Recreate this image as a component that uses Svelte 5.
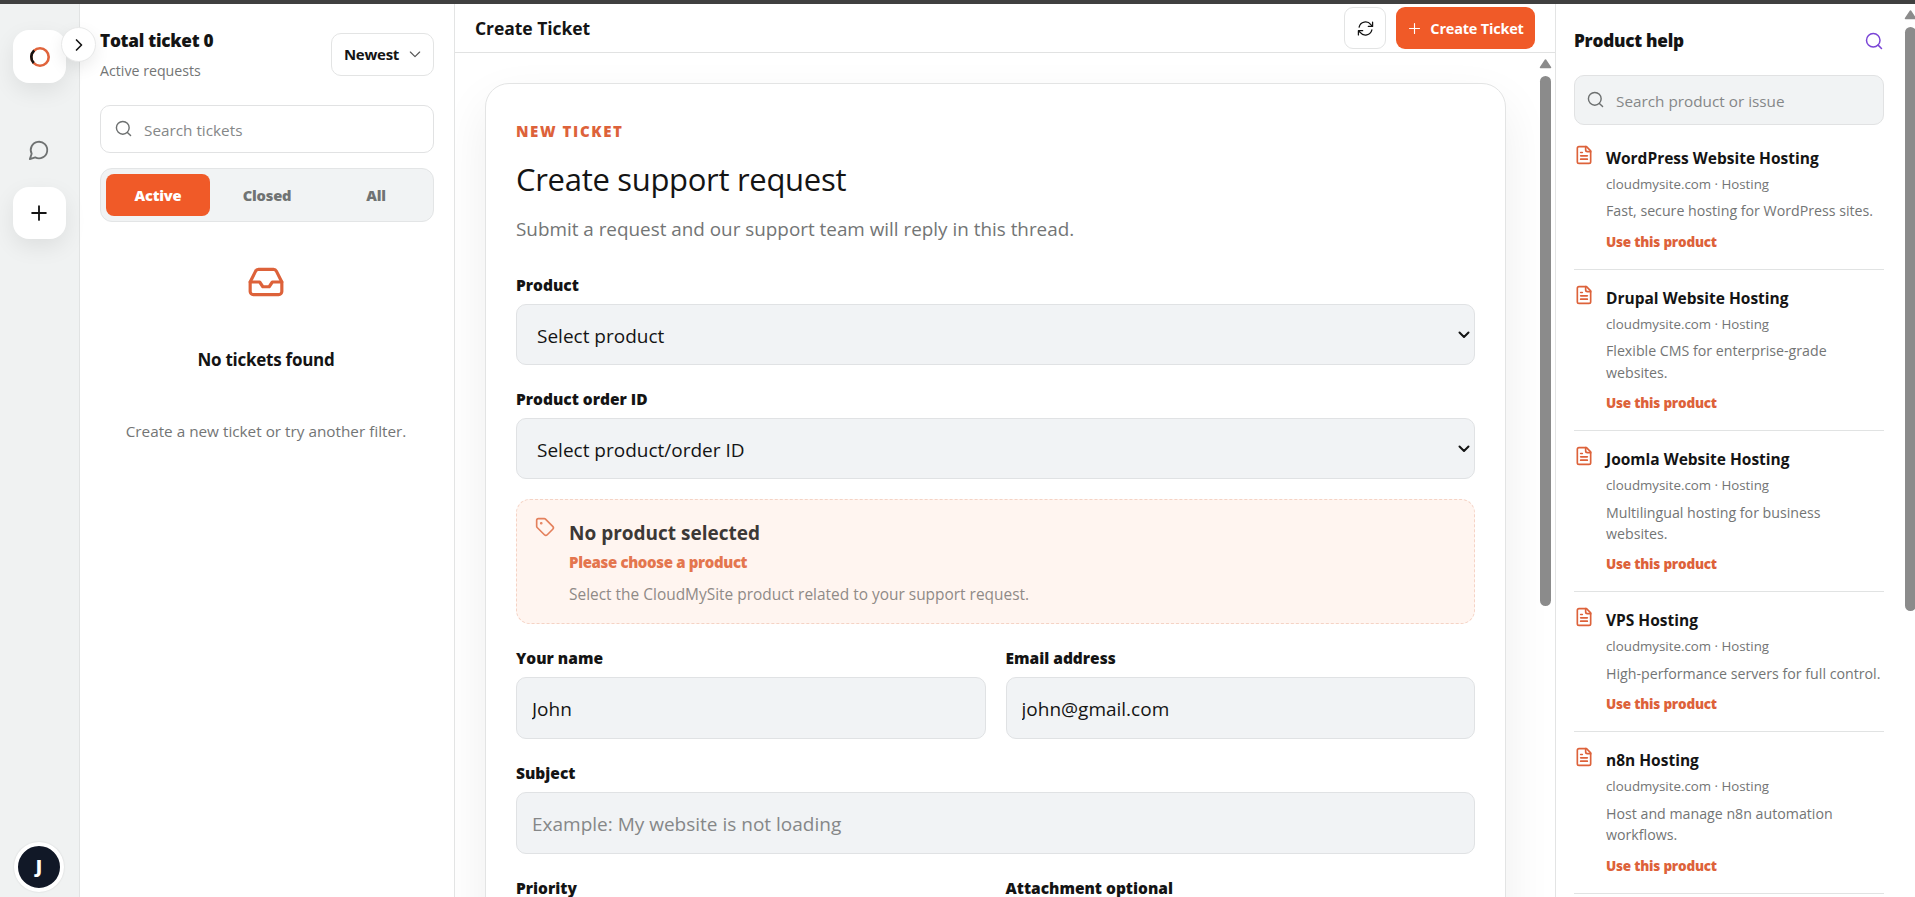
<script lang="ts">
  interface HelpItem {
    title: string;
    text: string;
  }

  const tabs = ["Active", "Closed", "All"];
  let activeTab = $state("Active");

  const products: HelpItem[] = [
    { title: "WordPress Website Hosting", text: "Fast, secure hosting for WordPress sites." },
    { title: "Drupal Website Hosting", text: "Flexible CMS for enterprise-grade websites." },
    { title: "Joomla Website Hosting", text: "Multilingual hosting for business websites." },
    { title: "VPS Hosting", text: "High-performance servers for full control." },
    { title: "n8n Hosting", text: "Host and manage n8n automation workflows." },
  ];

  let name = $state("John");
  let email = $state("john@gmail.com");
  let subject = $state("");
</script>

{#snippet searchIcon(size: number)}
  <svg class="icon" width={size} height={size} viewBox="0 0 24 24">
    <circle cx="11" cy="11" r="9" />
    <path d="m17.5 17.5 4.5 4.5" />
  </svg>
{/snippet}

{#snippet dropdown(placeholder: string)}
  <div class="select">
    <select><option>{placeholder}</option></select>
    <svg class="icon" width="12" height="8" viewBox="0 0 12 8">
      <path d="m1.5 1.5 4.5 4.5 4.5-4.5" />
    </svg>
  </div>
{/snippet}

<div class="page">
  <div class="topline"></div>

  <div class="layout">
    <nav class="rail">
      <button class="rail-btn raised" aria-label="Home">
        <svg class="icon" width="22" height="22" viewBox="0 0 22 22">
          <circle cx="11" cy="11" r="8.7" stroke="#e0643c" stroke-width="2.6" />
          <path d="M5.2 4.5a8.7 8.7 0 0 0-.5 12.5" stroke="#141414" stroke-width="2.6" stroke-linecap="butt" />
        </svg>
      </button>
      <button class="rail-btn chat" aria-label="Tickets">
        <svg class="icon" width="22" height="22" viewBox="0 0 24 24">
          <path d="M7.9 20A9 9 0 1 0 4 16.1L2 22Z" />
        </svg>
      </button>
      <button class="rail-btn raised new" aria-label="New ticket">
        <svg class="icon" width="22" height="22" viewBox="0 0 24 24">
          <path d="M4.5 12h15M12 4.5v15" />
        </svg>
      </button>
      <div class="avatar">J</div>
      <button class="toggle" aria-label="Expand">
        <svg class="icon" width="20" height="20" viewBox="0 0 24 24">
          <path d="m9 18 6-6-6-6" />
        </svg>
      </button>
    </nav>

    <section class="tickets">
      <div class="tickets-head">
        <div>
          <h2>Total ticket 0</h2>
          <p>Active requests</p>
        </div>
        <button class="sort">
          Newest
          <svg class="icon" width="16" height="16" viewBox="0 0 24 24">
            <path d="m5 9 7 7 7-7" />
          </svg>
        </button>
      </div>

      <label class="search">
        {@render searchIcon(17)}
        <input placeholder="Search tickets" />
      </label>

      <div class="tabs">
        {#each tabs as tab}
          <button class:active={tab === activeTab} onclick={() => (activeTab = tab)}>{tab}</button>
        {/each}
      </div>

      <div class="empty">
        <svg class="icon" width="38" height="38" viewBox="0 0 24 24">
          <path d="M22 12h-6l-2 3h-4l-2-3H2" />
          <path d="M5.45 5.11 2 12v6a2 2 0 0 0 2 2h16a2 2 0 0 0 2-2v-6l-3.45-6.89A2 2 0 0 0 16.76 4H7.24a2 2 0 0 0-1.79 1.11z" />
        </svg>
        <h3>No tickets found</h3>
        <p>Create a new ticket or try another filter.</p>
      </div>
    </section>

    <main>
      <header>
        <h1>Create Ticket</h1>
        <button class="refresh" aria-label="Refresh">
          <svg class="icon" width="17" height="17" viewBox="0 0 24 24">
            <path d="M3 10a9.3 9.3 0 0 1 16.5-3.5L22 9M22 3v6h-6" />
            <path d="M21 14a9.3 9.3 0 0 1-16.5 3.5L2 15M2 21v-6h6" />
          </svg>
        </button>
        <button class="create">
          <svg class="icon" width="15" height="15" viewBox="0 0 24 24">
            <path d="M4 12h16M12 4v16" />
          </svg>
          Create Ticket
        </button>
      </header>

      <div class="main-body">
        <div class="scroll-area">
          <form class="card">
            <span class="eyebrow">NEW TICKET</span>
            <h2>Create support request</h2>
            <p class="lead">Submit a request and our support team will reply in this thread.</p>

            <label class="field">
              <span>Product</span>
              {@render dropdown("Select product")}
            </label>

            <label class="field">
              <span>Product order ID</span>
              {@render dropdown("Select product/order ID")}
            </label>

            <div class="notice">
              <svg class="icon" width="20" height="20" viewBox="0 0 24 24">
                <path d="M12.59 2.59A2 2 0 0 0 11.17 2H4a2 2 0 0 0-2 2v7.17a2 2 0 0 0 .59 1.42l8.7 8.7a2.43 2.43 0 0 0 3.42 0l6.58-6.58a2.43 2.43 0 0 0 0-3.42z" />
                <circle cx="7.5" cy="7.5" r=".6" fill="currentColor" />
              </svg>
              <div>
                <h3>No product selected</h3>
                <strong>Please choose a product</strong>
                <p>Select the CloudMySite product related to your support request.</p>
              </div>
            </div>

            <div class="row">
              <label class="field">
                <span>Your name</span>
                <input bind:value={name} />
              </label>
              <label class="field">
                <span>Email address</span>
                <input bind:value={email} />
              </label>
            </div>

            <label class="field">
              <span>Subject</span>
              <input bind:value={subject} placeholder="Example: My website is not loading" />
            </label>

            <div class="row">
              <label class="field">
                <span>Priority</span>
                {@render dropdown("")}
              </label>
              <label class="field">
                <span>Attachment optional</span>
                <input type="text" />
              </label>
            </div>
          </form>
        </div>
        <div class="scrollbar">
          <svg width="13" height="10" viewBox="0 0 13 10"><path d="M6.5 1 11.5 8.5h-10z" /></svg>
          <div class="thumb main-thumb"></div>
        </div>
      </div>
    </main>

    <aside>
      <div class="help">
        <div class="help-head">
          <h2>Product help</h2>
          {@render searchIcon(18)}
        </div>
        <label class="search filled">
          {@render searchIcon(17)}
          <input placeholder="Search product or issue" />
        </label>

        {#each products as product}
          <article>
            <svg class="icon" width="20" height="20" viewBox="0 0 24 24">
              <path d="M15 2H6a2 2 0 0 0-2 2v16a2 2 0 0 0 2 2h12a2 2 0 0 0 2-2V7z" />
              <path d="M14 2v4a2 2 0 0 0 2 2h4M10 9H8M16 13H8M16 17H8" />
            </svg>
            <div>
              <h3>{product.title}</h3>
              <small>cloudmysite.com · Hosting</small>
              <p>{product.text}</p>
              <a href="#product">Use this product</a>
            </div>
          </article>
        {/each}
      </div>
      <div class="scrollbar outer">
        <svg width="13" height="10" viewBox="0 0 13 10"><path d="M6.5 1 11.5 8.5h-10z" /></svg>
        <div class="thumb help-thumb"></div>
      </div>
    </aside>
  </div>
</div>

<style>
  :global(body) {
    margin: 0;
    overflow: hidden;
  }

  .page {
    display: flex;
    flex-direction: column;
    height: 100vh;
    overflow: hidden;
    background: #fff;
    color: #141414;
    font-family: "Open Sans", "Noto Sans", sans-serif;
  }

  .page * {
    box-sizing: border-box;
  }

  h1, h2, h3, p {
    margin: 0;
  }

  button, input, select {
    font-family: inherit;
    color: inherit;
  }

  button {
    display: flex;
    align-items: center;
    justify-content: center;
    padding: 0;
    border: 0;
    background: none;
    white-space: nowrap;
  }

  .icon {
    flex: none;
    fill: none;
    stroke: currentColor;
    stroke-width: 2;
    stroke-linecap: round;
    stroke-linejoin: round;
  }

  .topline {
    flex: none;
    height: 4px;
    background: #404040;
  }

  .layout {
    flex: 1;
    min-height: 0;
    display: grid;
    grid-template-columns: 80px 375px 1101px 359px;
  }

  /* left rail */
  .rail {
    position: relative;
    display: flex;
    flex-direction: column;
    align-items: center;
    padding: 26px 0 5px;
    border-right: 1px solid #e1e3e3;
    background: #f0f2f2;
  }

  .rail-btn {
    width: 53px;
    height: 53px;
    border-radius: 16px;
  }

  .rail-btn.raised {
    background: #fff;
    box-shadow: 0 8px 22px rgba(0, 0, 0, 0.08);
  }

  .rail-btn.new {
    height: 52px;
    padding-right: 1px;
  }

  .rail-btn.chat {
    height: 52px;
    margin: 41px 0 11px;
    padding-right: 1px;
    color: #6f7272;
  }

  .avatar {
    width: 50px;
    height: 50px;
    margin: auto 1px 0 0;
    border: 4px solid #fff;
    border-radius: 50%;
    background: #111827;
    box-shadow: 0 0 2px rgba(0, 0, 0, 0.15);
    color: #fff;
    font-size: 18px;
    font-weight: 800;
    line-height: 41px;
    text-align: center;
  }

  .toggle {
    position: absolute;
    top: 23px;
    right: -17px;
    z-index: 2;
    width: 35px;
    height: 35px;
    border: 1px solid #e8e9e9;
    border-radius: 50%;
    background: #fff;
    box-shadow: 0 6px 16px rgba(0, 0, 0, 0.08);
  }

  /* ticket list */
  .tickets {
    padding: 25px 20px 0;
    border-right: 1px solid #e3e4e4;
  }

  .tickets-head {
    display: flex;
    justify-content: space-between;
    height: 76px;
  }

  .tickets-head h2,
  .help-head h2 {
    font-size: 17.2px;
    font-weight: 800;
    line-height: 24px;
    letter-spacing: -0.25px;
  }

  .tickets-head p {
    margin-top: 7px;
    color: #737575;
    font-size: 14.2px;
    line-height: 22px;
  }

  .sort {
    gap: 8px;
    width: 103px;
    height: 43px;
    margin-top: 4px;
    padding: 0 0 1px 2px;
    border: 1px solid #e3e4e4;
    border-radius: 10px;
    font-size: 15px;
    font-weight: 700;
    letter-spacing: -0.25px;
  }

  .sort .icon {
    color: #555;
    stroke-width: 1.7;
  }

  .search {
    display: flex;
    align-items: center;
    gap: 12px;
    height: 48px;
    padding: 0 14px;
    border: 1px solid #e1e2e3;
    border-radius: 10px;
    color: #6d7070;
  }

  .search :global(.icon) {
    margin-bottom: 1px;
  }

  .search input {
    flex: 1;
    min-width: 0;
    padding: 1px 0 0;
    border: 0;
    outline: 0;
    background: none;
    font-size: 15.3px;
  }

  input::placeholder {
    color: #858788;
  }

  .tabs {
    display: grid;
    grid-template-columns: repeat(3, 1fr);
    gap: 5px;
    height: 54px;
    margin-top: 15px;
    padding: 5px;
    border: 1px solid #e3e5e6;
    border-radius: 12px;
    background: #f1f3f4;
  }

  .tabs button {
    border-radius: 8px;
    color: #707373;
    font-size: 14.7px;
    font-weight: 800;
    letter-spacing: -0.2px;
  }

  .tabs button.active {
    background: #f05a28;
    color: #fff;
  }

  .empty {
    display: flex;
    flex-direction: column;
    align-items: center;
    padding: 41px 2px 0 0;
  }

  .empty .icon {
    color: #dd623a;
  }

  .empty h3 {
    margin-top: 47px;
    font-size: 17px;
    font-weight: 700;
    line-height: 24px;
    letter-spacing: -0.25px;
  }

  .empty p {
    margin-top: 47px;
    color: #737575;
    font-size: 15.3px;
    line-height: 24px;
  }

  /* main column */
  main {
    display: flex;
    flex-direction: column;
    min-height: 0;
    border-right: 1px solid #e3e4e4;
  }

  header {
    flex: none;
    display: flex;
    align-items: center;
    gap: 10px;
    height: 49px;
    padding: 0 20px;
    border-bottom: 1px solid #e1e2e2;
  }

  header h1 {
    margin-right: auto;
    font-size: 17.5px;
    font-weight: 700;
    letter-spacing: -0.05px;
  }

  .refresh {
    width: 42px;
    height: 42px;
    border: 1px solid #e3e4e4;
    border-radius: 9px;
  }

  .refresh .icon,
  .create .icon {
    stroke-width: 1.8;
  }

  .create {
    gap: 8px;
    width: 139px;
    height: 42px;
    border-radius: 9px;
    background: #f05a28;
    color: #fff;
    font-size: 14.5px;
    font-weight: 700;
    letter-spacing: -0.2px;
  }

  .main-body {
    flex: 1;
    min-height: 0;
    display: flex;
    overflow: hidden;
  }

  .scroll-area {
    flex: 1;
    padding: 30px 30px 0;
  }

  .card {
    display: flex;
    flex-direction: column;
    height: 1100px;
    padding: 35px 30px 0;
    border: 1px solid #e3e4e4;
    border-radius: 24px;
    background: #fff;
    box-shadow: 0 20px 50px rgba(0, 0, 0, 0.07);
  }

  .eyebrow {
    color: #dd623a;
    font-size: 15px;
    font-weight: 800;
    line-height: 24px;
    letter-spacing: 1.6px;
  }

  .card h2 {
    margin-top: 14px;
    font-size: 31px;
    font-weight: 400;
    line-height: 44px;
    letter-spacing: -0.3px;
  }

  .lead {
    margin-top: 13px;
    color: #737575;
    font-size: 18.87px;
    line-height: 30px;
  }

  .field {
    display: flex;
    flex-direction: column;
    margin-top: 22px;
  }

  .lead + .field {
    margin-top: 29px;
  }

  .field span {
    margin-bottom: 7px;
    font-size: 15.5px;
    font-weight: 800;
    line-height: 24px;
  }

  .field select,
  .field input {
    width: 100%;
    height: 61px;
    border: 1px solid #e0e2e4;
    border-radius: 10px;
    outline: 0;
    background: #f1f3f5;
    font-size: 19px;
  }

  /* the chevron shares the select's grid cell */
  .select {
    display: grid;
    align-items: center;
  }

  .select > * {
    grid-area: 1 / 1;
  }

  .select .icon {
    justify-self: end;
    margin-right: 5px;
    pointer-events: none;
  }

  .field select {
    padding: 2px 20px 0;
    appearance: none;
  }

  .field input {
    height: 62px;
    padding: 2px 15px 0;
  }

  .notice {
    display: flex;
    gap: 14px;
    height: 125px;
    margin-top: 20px;
    padding: 17px 18px;
    border: 1px dashed #f5d3c5;
    border-radius: 14px;
    background: #fff5f0;
  }

  .notice .icon {
    color: #e4805c;
  }

  .notice h3 {
    margin-top: 2px;
    color: #3c3836;
    font-size: 19px;
    font-weight: 700;
    line-height: 28px;
  }

  .notice strong {
    display: block;
    margin-top: 3px;
    color: #e4764e;
    font-size: 15px;
    font-weight: 800;
    line-height: 24px;
    letter-spacing: -0.35px;
  }

  .notice p {
    margin-top: 8px;
    color: #8f8a87;
    font-size: 15.45px;
    line-height: 24px;
  }

  .row {
    display: grid;
    grid-template-columns: 1fr 1fr;
    gap: 20px;
  }

  /* scrollbars */
  .scrollbar {
    flex: none;
    display: flex;
    flex-direction: column;
    align-items: center;
    width: 19px;
    padding-top: 6px;
  }

  .scrollbar svg {
    fill: #8b8b8b;
    stroke: #8b8b8b;
    stroke-width: 1.5;
    stroke-linejoin: round;
  }

  .thumb {
    width: 11px;
    margin-top: 7px;
    border-radius: 6px;
    background: #8b8b8b;
  }

  .main-thumb {
    height: 530px;
  }

  .help-thumb {
    height: 584px;
  }

  /* product help */
  aside {
    display: flex;
    min-height: 0;
    overflow: hidden;
  }

  .help {
    flex: none;
    width: 347px;
    padding: 25px 19px 0 18px;
  }

  .scrollbar.outer {
    width: 15px;
  }

  .help-head {
    display: flex;
    align-items: center;
    justify-content: space-between;
    height: 24px;
    margin-bottom: 22px;
    padding-right: 1px;
  }

  .help-head :global(.icon) {
    margin-bottom: 1px;
    color: #7a45d6;
  }

  .search.filled {
    height: 50px;
    margin-bottom: 5.2px;
    padding: 0 12px;
    background: #f1f3f4;
  }

  article {
    display: flex;
    gap: 10px;
    padding: 16px 0 17px 2px;
    border-bottom: 1px solid #e1e3e3;
  }

  article .icon {
    margin: -1px 0 0 -2px;
    color: #dd623a;
  }

  article > div {
    margin-left: 2px;
  }

  article h3 {
    font-size: 15.5px;
    font-weight: 700;
    line-height: 24px;
  }

  article small {
    display: block;
    margin-top: 4px;
    color: #737575;
    font-size: 13.3px;
    line-height: 20px;
  }

  article p {
    margin-top: 6.3px;
    color: #737575;
    font-size: 14.2px;
    line-height: 21.3px;
  }

  article a {
    display: block;
    margin-top: 10.3px;
    color: #dd623a;
    font-size: 13.5px;
    font-weight: 800;
    line-height: 20px;
    letter-spacing: -0.2px;
    text-decoration: none;
  }
</style>
